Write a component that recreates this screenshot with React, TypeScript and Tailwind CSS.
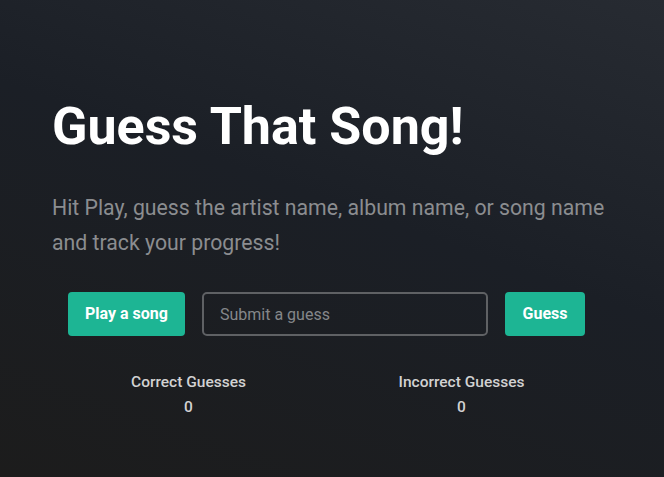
export default function App() {
  return (
    <div
      className="w-[664px] h-[477px] overflow-hidden bg-[linear-gradient(200deg,#272b32_0%,#1b1f26_45%,#1c1c1c_100%)]"
      style={{ fontFamily: "Roboto, 'Liberation Sans', sans-serif" }}
    >
      <div className="pl-[52px] pt-[97px] w-[612px]">
        {/* Title */}
        <h1 className="text-[52px] leading-[60px] font-bold text-white">
          Guess That Song!
        </h1>
        <p className="mt-[33px] text-[21.25px] leading-[35px] text-[#8b8d90]">
          Hit Play, guess the artist name, album name, or song name and track
          your progress!
        </p>

        {/* Controls */}
        <div className="mt-[32px] ml-[16px] flex items-center gap-[17px]">
          <button className="w-[117px] h-[44px] rounded-[4px] bg-[#1db594] text-white text-[16px] font-bold">
            Play a song
          </button>
          <input
            className="w-[286px] h-[44px] rounded-[5px] border-2 border-[#5f6164] bg-transparent px-[16px] text-[16px] text-white placeholder:text-[#85878a] outline-none"
            placeholder="Submit a guess"
          />
          <button className="w-[80px] h-[44px] rounded-[4px] bg-[#1db594] text-white text-[16px] font-bold">
            Guess
          </button>
        </div>

        {/* Score */}
        <div className="mt-[36px] w-[546px] grid grid-cols-2 text-center text-[15.5px] text-[#d2d2d2]">
          <div>
            <div className="font-medium leading-[20px]">Correct Guesses</div>
            <div className="font-medium leading-[20px] mt-[5px]">0</div>
          </div>
          <div>
            <div className="font-medium leading-[20px]">Incorrect Guesses</div>
            <div className="font-medium leading-[20px] mt-[5px]">0</div>
          </div>
        </div>
      </div>
    </div>
  );
}
